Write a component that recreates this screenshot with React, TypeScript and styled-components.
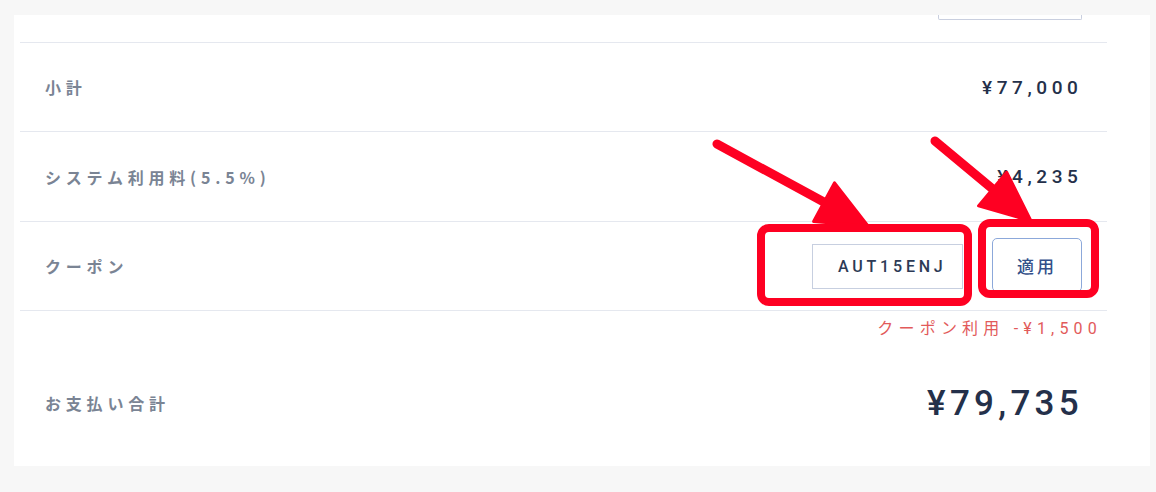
import styled, { createGlobalStyle } from "styled-components";

const GlobalStyle = createGlobalStyle`
	body {
		margin: 0;
		background: #f7f7f7;
		font-family: "Roboto", "Noto Sans CJK JP", sans-serif;
	}
`;

const Page = styled.div`
	width: 1156px;
	height: 492px;
	padding: 15px 0 0 14px;
	box-sizing: border-box;
	position: relative;
`;

const Card = styled.div`
	width: 1136px;
	height: 451px;
	background: #fff;
	padding: 0 43px 0 6px;
	box-sizing: border-box;
	display: flex;
	flex-direction: column;
`;

const TopStrip = styled.div`
	height: 28px;
	box-sizing: border-box;
	display: flex;
	justify-content: flex-end;
	padding-right: 25px;
	border-bottom: 1px solid #e5e8ef;
`;

const CutBox = styled.div`
	width: 144px;
	height: 5px;
	box-sizing: border-box;
	border: 1.5px solid #c9cfdf;
	border-top: none;
	border-radius: 0 0 2px 2px;
`;

const Row = styled.div<{ $height: number; $line?: boolean }>`
	height: ${(p) => p.$height}px;
	box-sizing: border-box;
	flex-shrink: 0;
	display: flex;
	align-items: center;
	justify-content: space-between;
	padding: 0 22px 0 25px;
	border-bottom: ${(p) => (p.$line ? "1px solid #e5e8ef" : "none")};
`;

const Label = styled.span`
	font-family: "Noto Sans CJK JP", "Roboto", sans-serif;
	font-size: 16px;
	font-weight: 700;
	letter-spacing: 4.8px;
	color: #7a8494;
`;

const Value = styled.span<{ $big?: boolean }>`
	font-size: ${(p) => (p.$big ? "35px" : "19px")};
	font-weight: 500;
	letter-spacing: ${(p) => (p.$big ? "4.3px" : "4.6px")};
	margin-right: ${(p) => (p.$big ? "2px" : "2.5px")};
	color: #24304a;
`;

const CouponBox = styled.div`
	display: flex;
	align-items: center;
	gap: 29px;
	margin-right: 3px;
`;

const CouponInput = styled.div`
	width: 151px;
	height: 45px;
	box-sizing: border-box;
	border: 1px solid #c7cfe0;
	display: flex;
	align-items: center;
	padding-left: 25px;
	font-size: 16px;
	font-weight: 500;
	letter-spacing: 3.8px;
	color: #2c3a55;
`;

const ApplyButton = styled.button`
	width: 90px;
	height: 54px;
	margin-top: -2px;
	box-sizing: border-box;
	border: 1.5px solid #8ca8da;
	border-radius: 5px;
	background: #fff;
	font-family: "Noto Sans CJK JP", sans-serif;
	font-size: 17px;
	font-weight: 500;
	letter-spacing: 3px;
	padding-left: 6px;
	color: #34508a;
`;

const Note = styled.div`
	height: 32px;
	flex-shrink: 0;
	display: flex;
	align-items: center;
	justify-content: flex-end;
	padding-right: 5px;
	font-size: 16px;
	letter-spacing: 5.2px;
	color: #e25a5a;
`;

const Overlay = styled.svg`
	position: absolute;
	left: 0;
	top: 0;
	pointer-events: none;
`;

const RED = "#fe0022";

const Arrow = ({ x1, y1, x2, y2 }: { x1: number; y1: number; x2: number; y2: number }) => {
	const dx = x2 - x1;
	const dy = y2 - y1;
	const len = Math.hypot(dx, dy);
	const ux = dx / len;
	const uy = dy / len;
	const head = 50;
	const half = 22;
	const bx = x2 - ux * head;
	const by = y2 - uy * head;
	const px = -uy;
	const py = ux;
	return (
		<g>
			<line x1={x1} y1={y1} x2={bx + ux * 6} y2={by + uy * 6} stroke={RED} strokeWidth={9} strokeLinecap="round" />
			<polygon
				points={`${x2},${y2} ${bx + px * half},${by + py * half} ${bx - px * half},${by - py * half}`}
				fill={RED}
				stroke={RED}
				strokeWidth={3}
				strokeLinejoin="round"
			/>
		</g>
	);
};

export default function App() {
	return (
		<>
			<GlobalStyle />
			<Page>
				<Card>
					<TopStrip>
						<CutBox />
					</TopStrip>
					<Row $height={89} $line>
						<Label>小計</Label>
						<Value>¥77,000</Value>
					</Row>
					<Row $height={90} $line>
						<Label>システム利用料(5.5%)</Label>
						<Value>¥4,235</Value>
					</Row>
					<Row $height={89} $line>
						<Label>クーポン</Label>
						<CouponBox>
							<CouponInput>AUT15ENJ</CouponInput>
							<ApplyButton>適用</ApplyButton>
						</CouponBox>
					</Row>
					<Note>クーポン利用 -¥1,500</Note>
					<Row $height={120}>
						<Label>お支払い合計</Label>
						<Value $big>¥79,735</Value>
					</Row>
				</Card>
				<Overlay width={1156} height={492}>
					<Arrow x1={717} y1={144} x2={868} y2={226} />
					<Arrow x1={935} y1={141} x2={1031} y2={221} />
					<rect x={761} y={228} width={207} height={74} rx={8} fill="none" stroke={RED} strokeWidth={8} />
					<rect x={982} y={223} width={113} height={71} rx={8} fill="none" stroke={RED} strokeWidth={8} />
				</Overlay>
			</Page>
		</>
	);
}
